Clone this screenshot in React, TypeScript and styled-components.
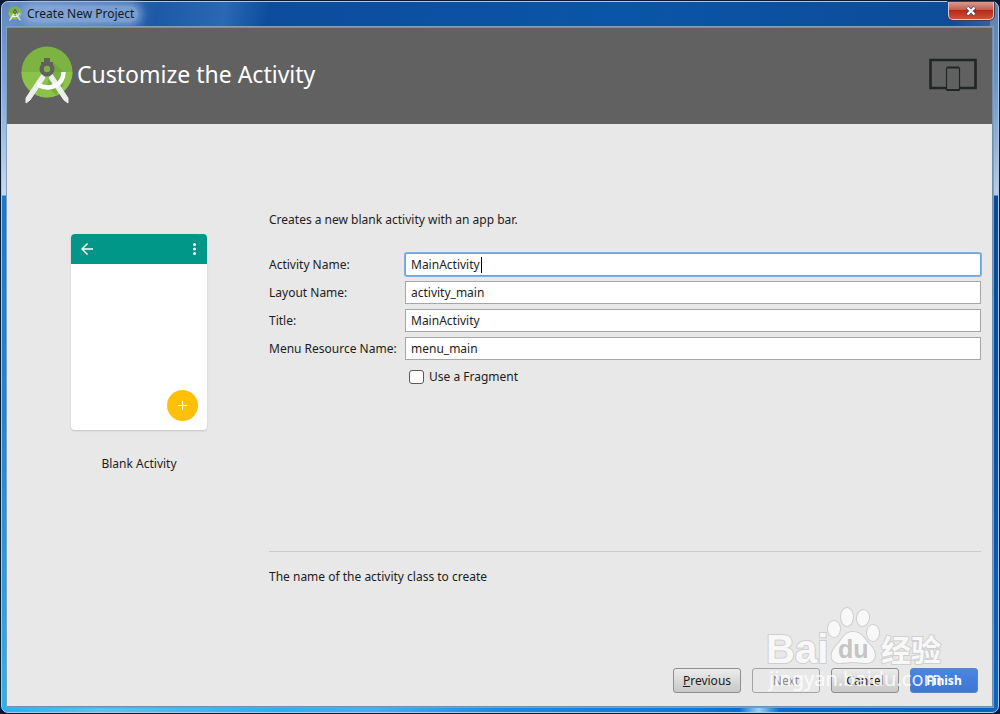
import React, { useState } from "react";
import styled, { createGlobalStyle } from "styled-components";

const GlobalStyle = createGlobalStyle`
  *, *::before, *::after { box-sizing: border-box; }
  body {
    margin: 0;
    background: #0b1a33;
    color: #1c1c1c;
    font: 12px/16px "Noto Sans", "Noto Sans CJK SC", sans-serif;
  }
  button, input { font: inherit; color: inherit; margin: 0; }
`;

const Window = styled.div`
  display: flex;
  flex-direction: column;
  min-height: calc(100vh - 2px);
  margin: 1px;
  padding: 0 5px 5px 5px;
  border: 1px solid #a9c9ea;
  border-radius: 7px;
  background:
    linear-gradient(#6285c0, #7fa5d8 80px, #c9daef 193px, #1878cc 194px, #2484d4 60%, #2cb4ea) left / 8px 100% no-repeat,
    linear-gradient(#6080aa, #6f95c4 80px, #b9cbe2 193px, #0a4a98 194px, #0b50a4 60%, #0c64c4) right / 8px 100% no-repeat,
    linear-gradient(90deg, #22b4ea, #5cc4ea 10%, #2cb0ea 28%, #4ab0ec 37%, #1a8ce4 50%, #0c78d8 70%, #0a6ccc 74%, #a4d0f4 76%, #0a6ccc 78%, #0c60c0) bottom / 100% 8px no-repeat,
    linear-gradient(100deg, #6f92cc, #1d59a6 14%, #2a68b4 20%, #0d4c9c 24%, #0a55a8 55%, #0d4c98 85%, #5c80b0 93%);
`;

const TitleBar = styled.div`
  display: flex;
  align-items: center;
  height: 25px;
  padding: 0 0 2px 1px;
`;

const WindowTitle = styled.span`
  margin-left: 4px;
  padding: 0 4px 0 1px;
  color: #101a28;
  border-radius: 8px;
  background: rgba(140, 172, 216, 0.8);
  box-shadow: 0 0 8px 4px rgba(140, 172, 216, 0.8);
`;

const CloseButton = styled.button`
  align-self: flex-start;
  display: grid;
  place-items: center;
  width: 46px;
  height: 18px;
  margin-left: auto;
  margin-right: -1px;
  padding: 0;
  border: 1px solid #e3c4c4;
  border-top: 0;
  border-radius: 0 0 5px 5px;
  background: linear-gradient(#dc9a8e, #cc5a48 45%, #b52a16 50%, #cf5038);
  box-shadow: 0 0 0 1px #3a3f58;
`;

const Dialog = styled.main`
  flex: 1;
  display: flex;
  flex-direction: column;
  border: 1px solid #6f90ae;
  border-left-width: 0;
  background: #e8e8e8;
  box-shadow: 0 0 0 1px #7f9fbc;
`;

const Header = styled.header`
  display: flex;
  align-items: center;
  height: 96px;
  padding: 0 15px 2px 14px;
  color: #fff;
  background: #616161;
`;

const Heading = styled.h1`
  flex: 1;
  margin: 0 0 2px 4px;
  font-size: 23px;
  line-height: 32px;
  font-weight: 400;
`;

const Content = styled.div`
  flex: 1;
  display: grid;
  grid-template-columns: 136px 1fr;
  column-gap: 62px;
  padding: 88px 11px 0 64px;
`;

const Preview = styled.figure`
  margin: 22px 0 0;
  text-align: center;
`;

const Phone = styled.div`
  display: flex;
  flex-direction: column;
  height: 196px;
  border-radius: 4px;
  overflow: hidden;
  background: #fff;
  box-shadow: 0 1px 2px rgba(0, 0, 0, 0.15);
`;

const AppBar = styled.div`
  display: flex;
  align-items: center;
  justify-content: space-between;
  height: 30px;
  padding: 0 10px;
  background: #009688;
`;

const Fab = styled.div`
  display: grid;
  place-items: center;
  width: 31px;
  height: 31px;
  margin: auto 9px 9px auto;
  border-radius: 50%;
  background: #ffc107;
`;

const Caption = styled.figcaption`
  margin-top: 26px;
`;

const Form = styled.form`
  display: flex;
  flex-direction: column;
`;

const Text = styled.p`
  margin: 0;
`;

const Fields = styled.div`
  display: grid;
  grid-template-columns: 136px 1fr;
  align-items: center;
  row-gap: 5px;
  margin-top: 25px;
`;

const TextInput = styled.input<{ $caret?: boolean }>`
  width: 100%;
  height: 23px;
  padding: 0 5px;
  border: 1px solid #a6a6a6;
  background: ${(p) => (p.$caret ? "linear-gradient(#000, #000) 75px center / 1px 16px no-repeat #fff" : "#fff")};
  caret-color: ${(p) => (p.$caret ? "transparent" : "auto")};
  outline: none;
  &:focus {
    border-color: #6ea3e4;
    border-radius: 2px;
    box-shadow: 0 0 0 1px #7fb0ea;
  }
`;

const CheckRow = styled.label`
  grid-column: 2;
  display: flex;
  align-items: center;
  gap: 5px;
  padding: 4px;
`;

const CheckBox = styled.input`
  appearance: none;
  width: 15px;
  height: 14px;
  border: 1px solid #5a5a5a;
  border-radius: 3px;
  background: #fff;
  &:checked { background: #4080dc; }
`;

const Description = styled.div`
  margin-top: auto;
  padding-top: 17px;
  border-top: 1px solid #cbcbcb;
`;

const Footer = styled.footer`
  position: relative;
  display: flex;
  justify-content: flex-end;
  gap: 11px;
  padding: 83px 14px 13px;
`;

const Button = styled.button<{ $primary?: boolean }>`
  width: 68px;
  height: 25px;
  padding: 0;
  border: 1px solid ${(p) => (p.$primary ? "#5a84c8" : "#8e8e8e")};
  border-radius: 3px;
  color: ${(p) => (p.$primary ? "#fff" : "#1c1c1c")};
  font-weight: ${(p) => (p.$primary ? 700 : 400)};
  background: ${(p) => (p.$primary ? "linear-gradient(#4a86e4, #3e76d2)" : "linear-gradient(#ececec, #c8c8c8)")};
  &:disabled { color: #8c8c8c; background: #e8e8e8; border-color: #a4a4a4; }
`;

const Watermark = styled.svg`
  position: absolute;
  right: 45px;
  bottom: 10px;
  pointer-events: none;
`;

function StudioLogo({ width, height }: { width: number; height: number }) {
  return (
    <svg width={width} height={height} viewBox="0 0 52 58" aria-hidden="true">
      <circle cx="26" cy="26" r="25.500" fill="#7cb342" />
      <path d="M.5 26a25.500 25.500 0 0 0 51 0z" fill="#8bc34a" />
      <path d="M31 15l14 13-3 12-7 9-9-9z" fill="#689f38" opacity=".55" />
      <path d="M21 28L5 52v5l4-3L24 32zM31 28l16 24v5l-4-3L28 32z" fill="#eee" stroke="#eee" strokeLinejoin="round" />
      <path d="M42.500 26C42.500 40 28 45 16.500 38.500" fill="none" stroke="#fff" strokeWidth="4.500" />
      <path d="M23 12h6v4h3v2.500a7.500 7.500 0 1 1-12 0V16h3z" fill="#616161" />
      <circle cx="26" cy="23" r="3.200" fill="#7cb342" />
    </svg>
  );
}

const fields = [
  { id: "activity", label: "Activity Name:", value: "MainActivity" },
  { id: "layout", label: "Layout Name:", value: "activity_main" },
  { id: "title", label: "Title:", value: "MainActivity" },
  { id: "menu", label: "Menu Resource Name:", value: "menu_main" },
];

export default function App() {
  const [touched, setTouched] = useState(false);
  const touch = () => setTouched(true);

  return (
    <>
      <GlobalStyle />
      <Window>
        <TitleBar>
          <StudioLogo width={14} height={15} />
          <WindowTitle>Create New Project</WindowTitle>
          <CloseButton aria-label="Close">
            <svg width="12" height="10" viewBox="0 0 12 10">
              <path d="M2 1.500L10 8.500M10 1.500L2 8.500" stroke="#4b4b62" strokeWidth="4" />
              <path d="M2.500 1.500L9.500 8.500M9.500 1.500L2.500 8.500" stroke="#fff" strokeWidth="2.400" />
            </svg>
          </CloseButton>
        </TitleBar>
        <Dialog>
          <Header>
            <StudioLogo width={52} height={58} />
            <Heading>Customize the Activity</Heading>
            <svg width="48" height="34" viewBox="0 0 48 34" fill="none" stroke="#212625" aria-hidden="true">
              <path d="M17 30H1.500V2h45v28H31" strokeWidth="2.600" />
              <rect x="17.500" y="9.500" width="13" height="23" rx="1" strokeWidth="1.200" />
              <path d="M18 9.500h12M18 32h12" strokeWidth="2" />
            </svg>
          </Header>
          <Content>
            <Preview>
              <Phone>
                <AppBar>
                  <svg width="12" height="12" viewBox="0 0 12 12" fill="none" stroke="#fff" strokeWidth="1.500">
                    <path d="M12 6H1M6.500.5L1 6l5.500 5.500" />
                  </svg>
                  <svg width="5" height="12" viewBox="0 0 5 12" fill="#fff">
                    <circle cx="2.500" cy="1.500" r="1.500" />
                    <circle cx="2.500" cy="6" r="1.500" />
                    <circle cx="2.500" cy="10.500" r="1.500" />
                  </svg>
                </AppBar>
                <Fab>
                  <svg width="9" height="9" viewBox="0 0 9 9" stroke="#fff">
                    <path d="M4.500 0v9M0 4.500h9" />
                  </svg>
                </Fab>
              </Phone>
              <Caption>Blank Activity</Caption>
            </Preview>
            <Form id="activity-form" onSubmit={(e) => e.preventDefault()}>
              <Text>Creates a new blank activity with an app bar.</Text>
              <Fields>
                {fields.map((f, i) => (
                  <React.Fragment key={f.id}>
                    <label htmlFor={f.id}>{f.label}</label>
                    <TextInput
                      id={f.id}
                      defaultValue={f.value}
                      autoFocus={i === 0}
                      $caret={i === 0 && !touched}
                      onKeyDown={touch}
                      onMouseDown={touch}
                    />
                  </React.Fragment>
                ))}
                <CheckRow>
                  <CheckBox type="checkbox" />
                  Use a Fragment
                </CheckRow>
              </Fields>
              <Description>
                <Text>The name of the activity class to create</Text>
              </Description>
            </Form>
          </Content>
          <Footer>
            <Button type="button"><u>P</u>revious</Button>
            <Button type="button" disabled>Next</Button>
            <Button type="button">Cancel</Button>
            <Button $primary form="activity-form">Finish</Button>
            <Watermark width="182" height="92" viewBox="0 0 182 92" fill="#f8f8f8" stroke="#cfcfcf" paintOrder="stroke" strokeWidth="2" fontFamily='"Liberation Sans", "Noto Sans CJK SC", sans-serif'>
              <text x="1" y="59" fontSize="40" fontWeight="700">Bai</text>
              <path d="M88 28c9 0 11 7 17 13 8 8 6 18-4 18-5 0-8-1-13-1s-8 1-13 1c-10 0-11-10-3-18 6-6 7-13 16-13z" />
              <ellipse cx="69" cy="25" rx="6" ry="8" />
              <ellipse cx="82" cy="13" rx="6" ry="9" />
              <ellipse cx="98" cy="14" rx="6" ry="8" transform="rotate(10 98 14)" />
              <ellipse cx="108" cy="29" rx="6" ry="8" />
              <text x="73" y="54" fontSize="25" fontWeight="700" fill="#c4c4c4" stroke="none">du</text>
              <text x="116" y="57" fontSize="30" fontWeight="700">经验</text>
              <text x="4" y="82" fontSize="20" fill="#fff" fillOpacity=".85" stroke="none" fontFamily='"Noto Sans", sans-serif'>jingyan.baidu.com</text>
            </Watermark>
          </Footer>
        </Dialog>
      </Window>
    </>
  );
}
